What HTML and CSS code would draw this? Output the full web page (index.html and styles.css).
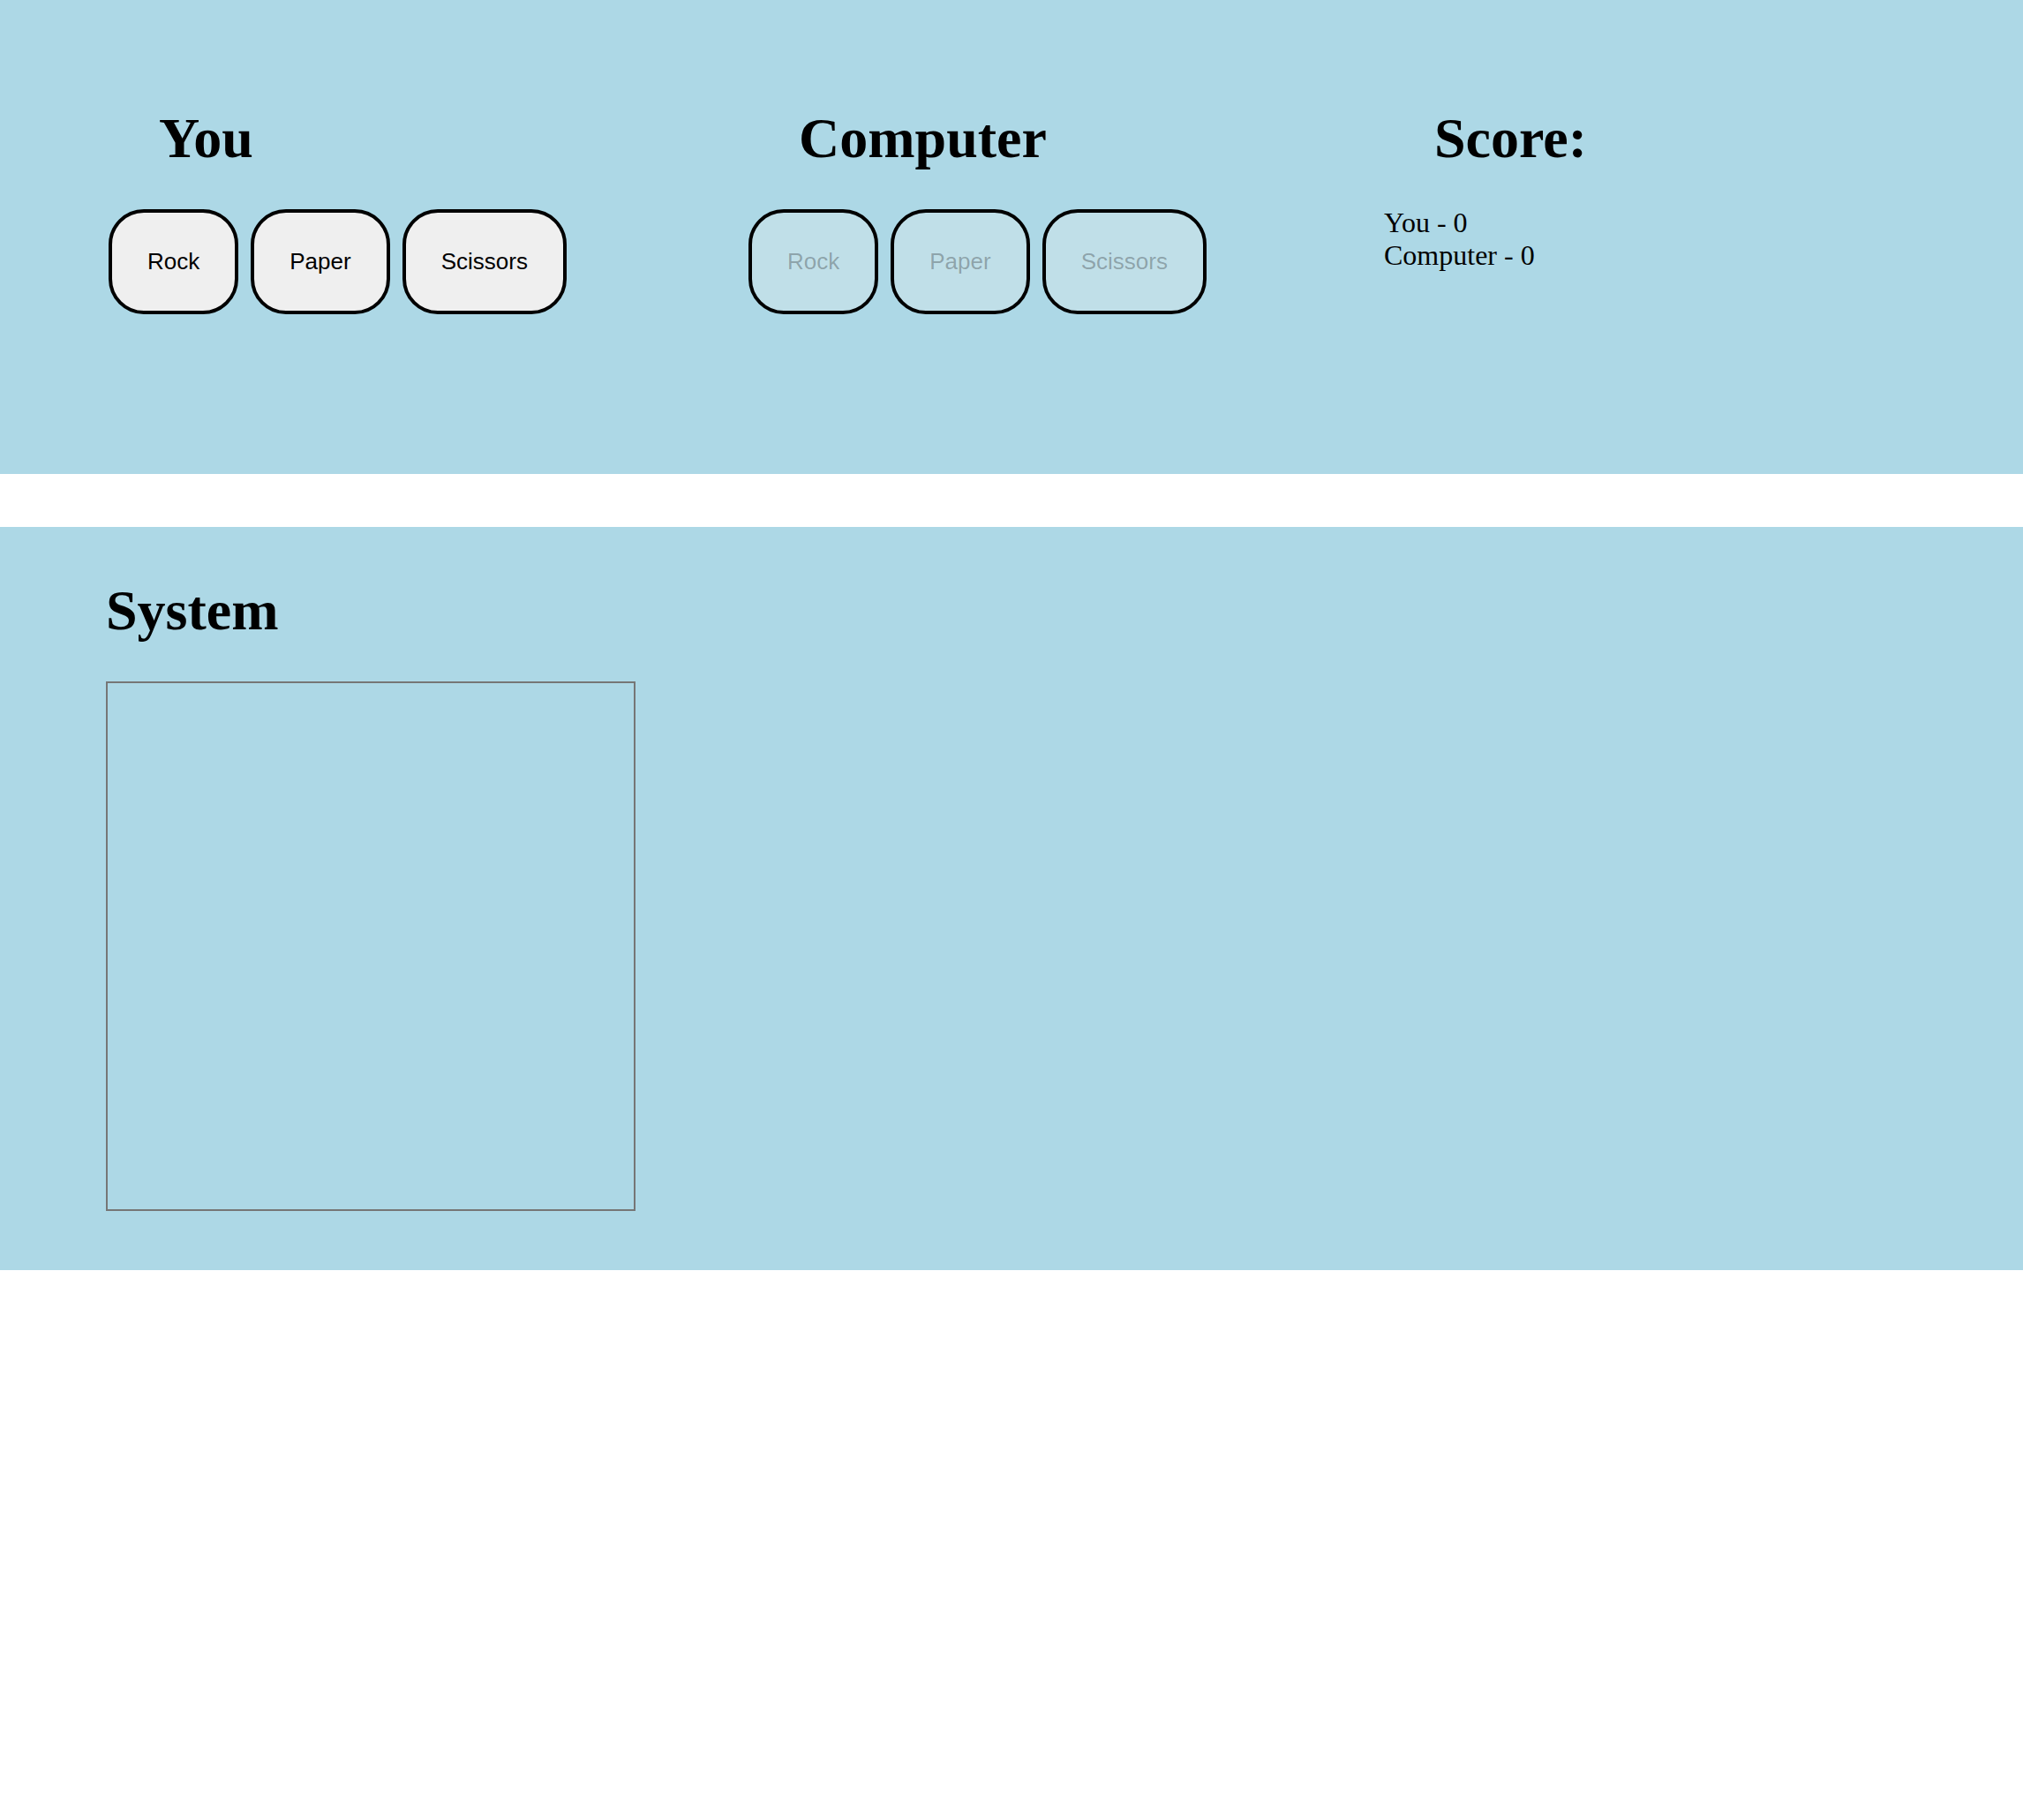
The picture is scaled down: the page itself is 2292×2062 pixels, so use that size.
FILE: index.html
```html
<!DOCTYPE html>
<html lang="en">
<head>
<meta charset="utf-8">
<title>Rock Paper Scissors</title>
<link rel="stylesheet" href="styles.css">
</head>
<body>
  <section class="game">
    <div class="column col-you">
      <h1 class="title">You</h1>
      <div class="choices">
        <button class="choice">Rock</button>
        <button class="choice">Paper</button>
        <button class="choice">Scissors</button>
      </div>
    </div>
    <div class="column col-computer">
      <h1 class="title">Computer</h1>
      <div class="choices">
        <button class="choice" disabled>Rock</button>
        <button class="choice" disabled>Paper</button>
        <button class="choice" disabled>Scissors</button>
      </div>
    </div>
    <div class="column col-score">
      <h1 class="title">Score:</h1>
      <div class="score-lines">
        <div>You - 0</div>
        <div>Computer - 0</div>
      </div>
    </div>
  </section>
  <section class="system">
    <h1 class="title system-title">System</h1>
    <div class="log"></div>
  </section>
</body>
</html>
```
FILE: styles.css
```css
html, body {
  margin: 0;
  padding: 0;
  background: #ffffff;
  font-family: "Liberation Serif", "Times New Roman", serif;
  color: #000;
}

.game {
  background: #add8e6;
  height: 537px;
  box-sizing: border-box;
  padding: 120px 0 0 123px;
  display: grid;
  grid-template-columns: 725px 720px 1fr;
  align-items: start;
}

.title {
  font-family: "Liberation Serif", "Times New Roman", serif;
  font-weight: bold;
  font-size: 64px;
  line-height: normal;
  margin: 0 0 43px 0;
  padding-left: 57px;
}

.choices {
  display: flex;
  gap: 14px;
}

.choice {
  font-family: "Liberation Sans", Arial, sans-serif;
  font-size: 26px;
  line-height: normal;
  padding: 40px;
  border: 4px solid #000;
  border-radius: 40px;
  background: #efefef;
  color: #000;
  margin: 0;
}

.choice:disabled {
  background: rgba(239, 239, 239, 0.3);
  color: rgba(16, 16, 16, 0.3);
}

.score-lines {
  font-size: 32px;
  line-height: normal;
  margin-top: -3px;
}

.system {
  background: #add8e6;
  margin-top: 60px;
  height: 842px;
  box-sizing: border-box;
  padding: 58px 0 0 120px;
}

.system-title {
  padding-left: 0;
}

.log {
  width: 600px;
  height: 600px;
  box-sizing: border-box;
  border: 2px solid #767676;
}
```
